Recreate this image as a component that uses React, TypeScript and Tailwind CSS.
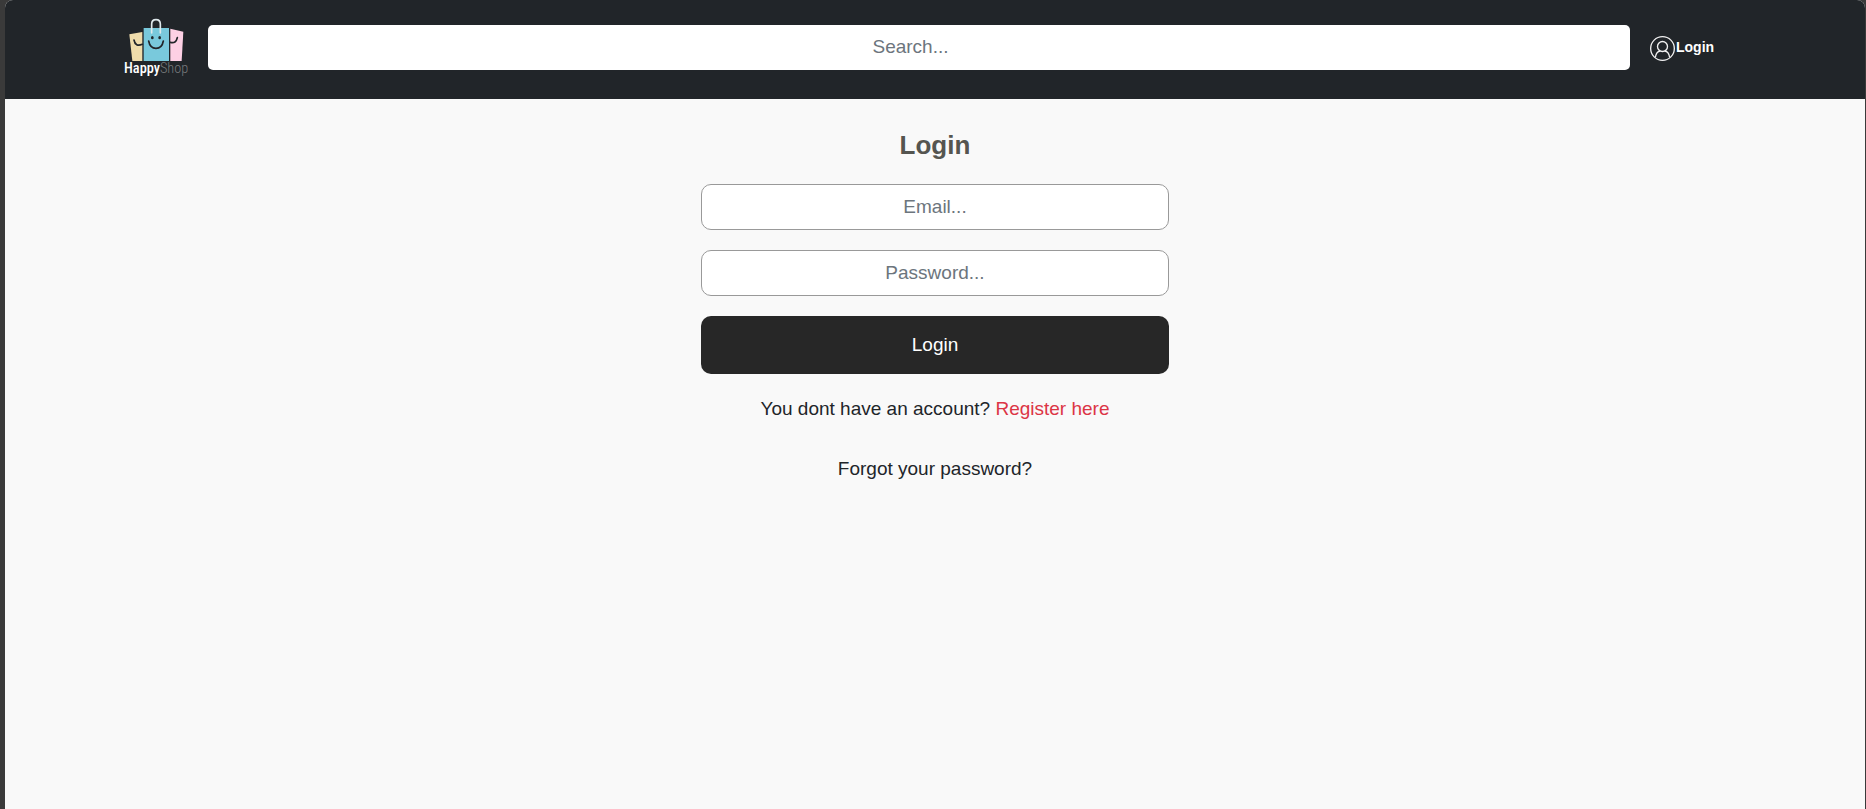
function ShopLogo() {
  return (
    <svg viewBox="42 48 192 186" className="h-[62px] w-16 shrink-0" role="img" aria-label="HappyShop">
      <path d="M58 103 L97 96 L97 183 L67 183 Z" fill="#efdcab" />
      <path d="M181 86 L220 95 L215 183 L181 183 Z" fill="#fdd0e4" />
      <rect x="101" y="84" width="76" height="99" fill="#79c9dc" />
      <path d="M72 120 Q76 142 97 133" fill="none" stroke="#22262a" strokeWidth="5" strokeLinecap="round" />
      <path d="M181 127 Q198 132 202 113" fill="none" stroke="#22262a" strokeWidth="5" strokeLinecap="round" />
      <path d="M116 123 Q120 145 138 145 Q156 145 160 123" fill="none" stroke="#22262a" strokeWidth="5" strokeLinecap="round" />
      <ellipse cx="127" cy="113" rx="4" ry="5" fill="#22262a" />
      <ellipse cx="149" cy="113" rx="4" ry="5" fill="#22262a" />
      <path d="M125 99 V72 Q125 59 138 59 Q151 59 151 72 V99" fill="none" stroke="#dfe9ec" strokeWidth="5" strokeLinecap="round" />
      <text x="42" y="220" fontSize="43" fontFamily="'Roboto Condensed', Roboto, sans-serif">
        <tspan fill="#ffffff" fontWeight="500">Happy</tspan>
        <tspan fill="#777a7c" fontWeight="300">Shop</tspan>
      </text>
    </svg>
  );
}

function UserIcon() {
  return (
    <svg viewBox="0 0 75 75" className="mt-0.5 size-[25px] shrink-0" fill="none" stroke="#f1f1f1" strokeWidth="4" aria-hidden="true">
      <circle cx="37.5" cy="37.5" r="35.5" />
      <circle cx="37.5" cy="31.5" r="15" />
      <path d="M16 64 Q19 46 31 45 M59 64 Q56 46 44 45" />
    </svg>
  );
}

const fieldClass =
  "h-[46px] w-full rounded-[10px] border border-[#999999] bg-white px-3 text-center text-[19px] text-[#212529] outline-none placeholder:text-[#6c757d]";

export default function App() {
  return (
    <div className="min-h-screen bg-[#3a3a3a] pr-px pl-[5px] font-['Liberation_Sans',Arial,sans-serif] text-[19px] text-[#212529]">
      <div className="min-h-screen overflow-hidden rounded-t-lg bg-[#f9f9f9]">
        <header className="bg-[#212529] px-[119px] pt-4 pb-[21px]">
          <nav className="flex items-center">
            <a href="#home" className="mr-5 shrink-0">
              <ShopLogo />
            </a>
            <input
              type="search"
              aria-label="Search"
              placeholder="Search..."
              className="h-[45px] min-w-0 flex-1 rounded-[5px] bg-white px-3 text-center text-[19px] outline-none placeholder:text-[#6c757d]"
            />
            <a href="#login" className="ml-5 flex w-24 items-center gap-px text-[14px] leading-5 font-bold text-white">
              <UserIcon />
              Login
            </a>
          </nav>
        </header>
        <main className="px-4 pt-7">
          <form className="mx-auto flex w-full max-w-[468px] flex-col items-center gap-5" onSubmit={(e) => e.preventDefault()}>
            <h1 className="text-[26px] leading-[37px] font-bold text-[#555550]">Login</h1>
            <input type="email" aria-label="Email" placeholder="Email..." className={fieldClass} />
            <input type="password" aria-label="Password" placeholder="Password..." className={fieldClass} />
            <button type="submit" className="h-[58px] w-full rounded-[10px] bg-[#272727] text-white">
              Login
            </button>
            <p className="leading-[30px]">
              You dont have an account?{" "}
              <a href="#register" className="text-[#dc3545]">
                Register here
              </a>
            </p>
            <a href="#forgot" className="mt-[10px] leading-[30px]">
              Forgot your password?
            </a>
          </form>
        </main>
      </div>
    </div>
  );
}
